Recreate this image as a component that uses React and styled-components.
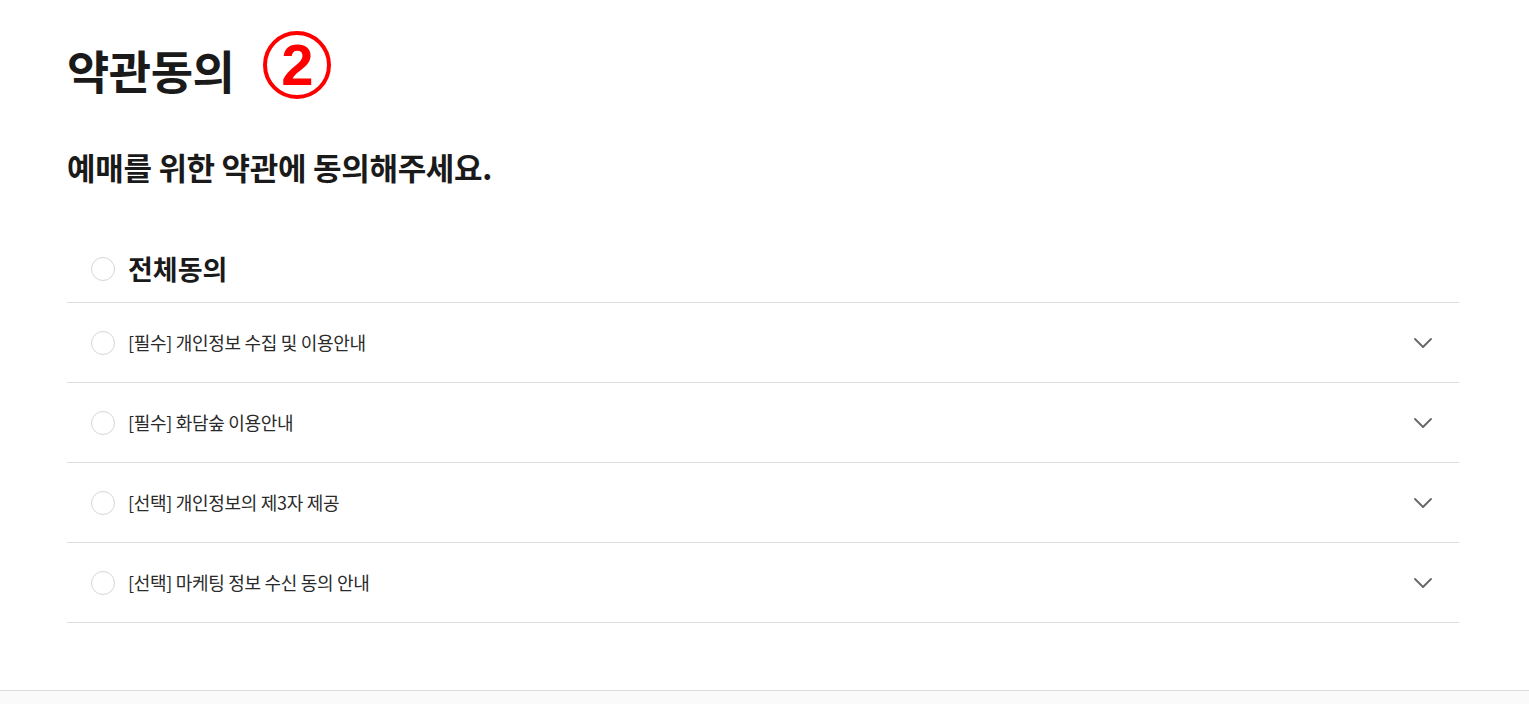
import React from "react";
import styled, { createGlobalStyle } from "styled-components";

const GlobalStyle = createGlobalStyle`
  html, body {
    margin: 0;
    padding: 0;
    background: #fff;
    font-family: "Noto Sans CJK KR", "Noto Sans", sans-serif;
    color: #222;
  }
`;

const Page = styled.div`
  min-height: 704px;
  display: flex;
  flex-direction: column;
`;

const Main = styled.main`
  padding: 0 70px 0 67px;
  height: 690px;
  box-sizing: border-box;
`;

const TitleRow = styled.div`
  display: flex;
  align-items: center;
  gap: 29px;
  padding-top: 31px;
  height: 68px;
`;

const Title = styled.h1`
  margin: 0;
  font-size: 46px;
  font-weight: 700;
  letter-spacing: -0.5px;
  color: #1a1a1a;
  line-height: 1;
  padding-top: 8px;
`;

const StepBadge = styled.span`
  width: 60px;
  height: 60px;
  border: 4px solid #ff0000;
  border-radius: 50%;
  display: flex;
  align-items: center;
  justify-content: center;
  color: #ff0000;
  font-family: "Liberation Sans", Arial, sans-serif;
  font-weight: 700;
  font-size: 58px;
  line-height: 1;
`;

const Subtitle = styled.h2`
  margin: 48px 0 0;
  font-size: 31px;
  font-weight: 700;
  letter-spacing: -0.3px;
  color: #1a1a1a;
  line-height: 40px;
`;

const List = styled.ul`
  list-style: none;
  margin: 48px 0 0;
  padding: 0;
`;

const Row = styled.li`
  display: flex;
  align-items: center;
  height: ${(p) => (p.$all ? "67px" : "79px")};
  padding: 0 27px 0 24px;
  border-bottom: 1px solid #dcdcdc;
`;

const Check = styled.span`
  width: 22px;
  height: 22px;
  border: 1px solid #d6d6d6;
  border-radius: 50%;
  flex-shrink: 0;
  margin-right: 13px;
`;

const Label = styled.span`
  flex: 1;
  font-size: ${(p) => (p.$all ? "27px" : "18px")};
  font-weight: ${(p) => (p.$all ? 700 : 400)};
  letter-spacing: ${(p) => (p.$all ? "0" : "-0.3px")};
  color: ${(p) => (p.$all ? "#1a1a1a" : "#2a2a2a")};
  line-height: 1.4;
`;

const Chevron = styled.svg`
  width: 18px;
  height: 10px;
  flex-shrink: 0;
`;

const Footer = styled.footer`
  flex: 1;
  border-top: 1px solid #dcdcdc;
  background: #fafafa;
  min-height: 13px;
`;

const terms = [
  "[필수] 개인정보 수집 및 이용안내",
  "[필수] 화담숲 이용안내",
  "[선택] 개인정보의 제3자 제공",
  "[선택] 마케팅 정보 수신 동의 안내",
];

export default function App() {
  return (
    <Page>
      <GlobalStyle />
      <Main>
        <TitleRow>
          <Title>약관동의</Title>
          <StepBadge>2</StepBadge>
        </TitleRow>
        <Subtitle>예매를 위한 약관에 동의해주세요.</Subtitle>
        <List>
          <Row $all>
            <Check />
            <Label $all>전체동의</Label>
          </Row>
          {terms.map((t) => (
            <Row key={t}>
              <Check />
              <Label>{t}</Label>
              <Chevron viewBox="0 0 18 10" fill="none">
                <path
                  d="M1 1l8 8 8-8"
                  stroke="#666"
                  strokeWidth="1.8"
                  strokeLinecap="round"
                  strokeLinejoin="round"
                />
              </Chevron>
            </Row>
          ))}
        </List>
      </Main>
      <Footer />
    </Page>
  );
}
